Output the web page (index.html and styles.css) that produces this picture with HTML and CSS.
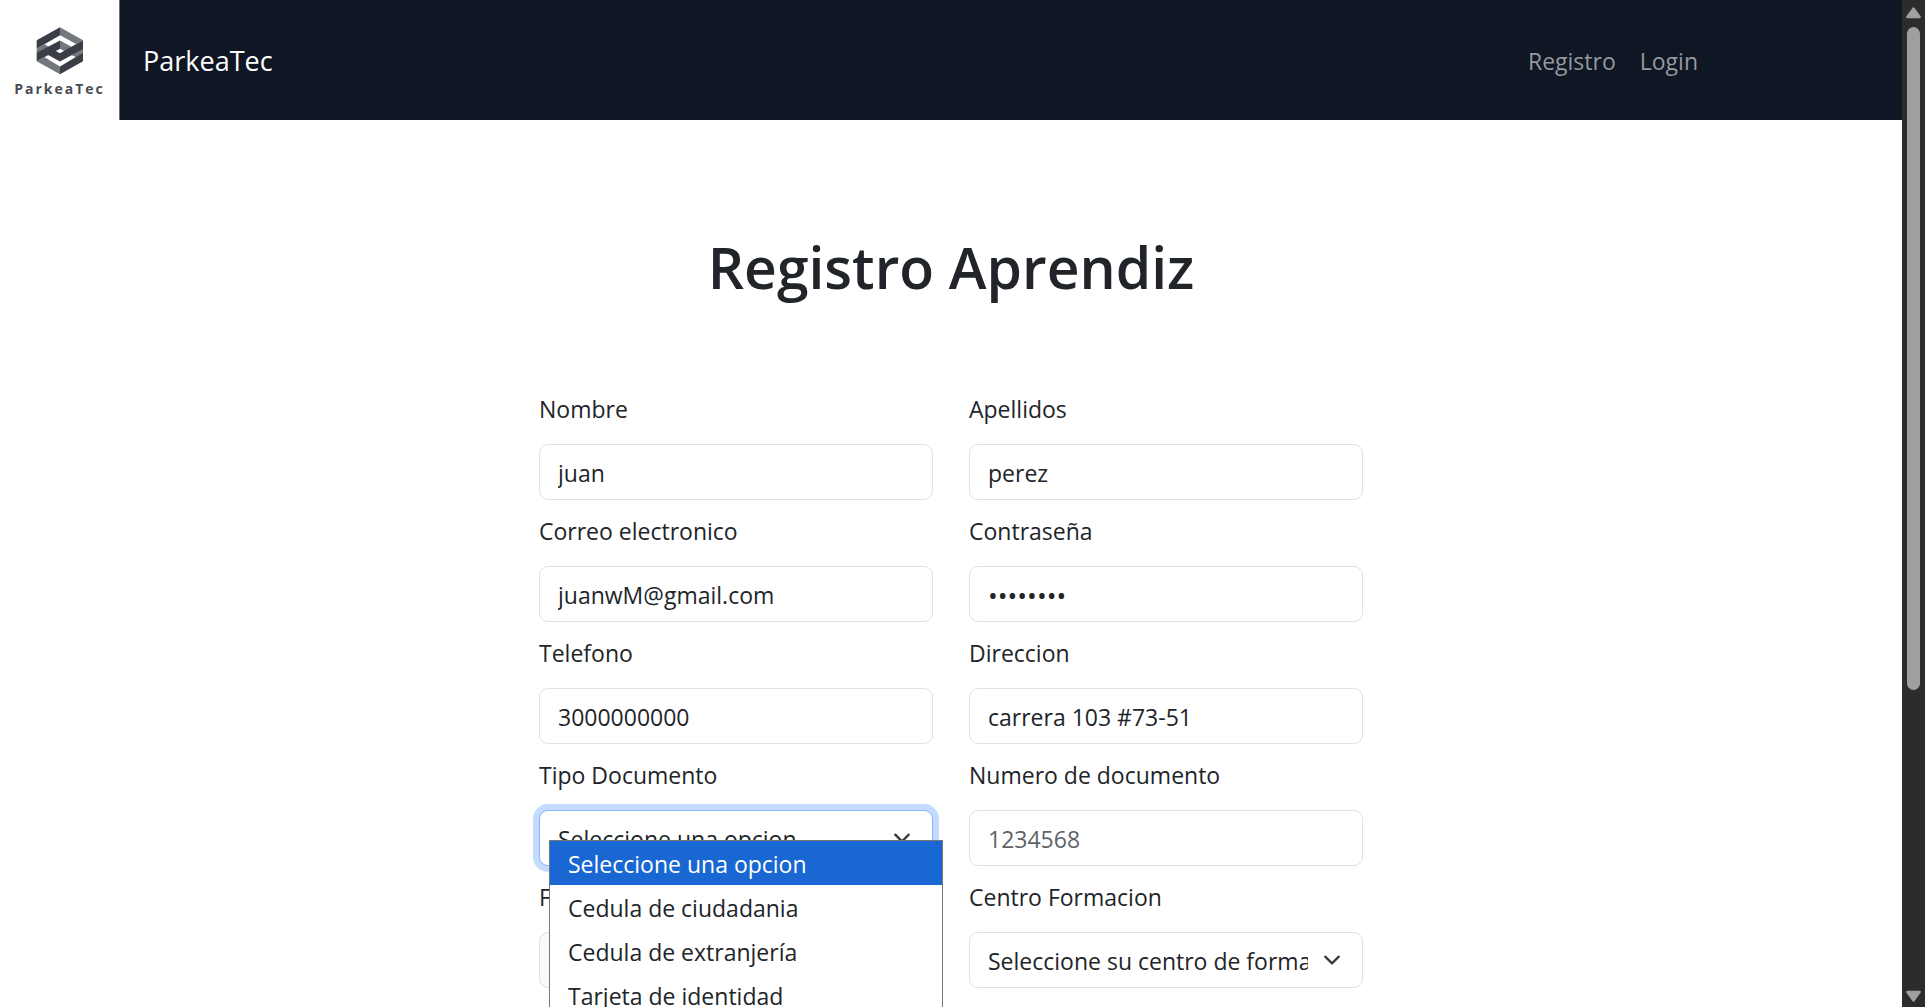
FILE: index.html
```html
<!DOCTYPE html>
<html lang="es">
<head>
  <meta charset="utf-8">
  <meta name="viewport" content="width=device-width, initial-scale=1">
  <title>ParkeaTec</title>
  <link rel="stylesheet" href="styles.css">
</head>
<body>
  <div class="page">
    <header class="navbar">
      <div class="logo">
        <svg class="logo-mark" viewBox="107 80 144 146" aria-hidden="true">
          <path fill="#74777d" d="M179 81 249 120 228 132 179 105Z"/>
          <path fill="#3b3e47" d="M179 81V105L108 146V120Z"/>
          <path fill="#74777d" d="M108 146 131 132 145 140 108 160Z"/>
          <path fill="#74777d" d="M179 121 225 146 202 158 179 146Z"/>
          <path fill="#74777d" d="M249 158V146L213 165 228 172Z"/>
          <path fill="#3b3e47" d="M249 120V147L179 185 133 160 156 148 179 160Z"/>
          <path fill="#3b3e47" d="M179 121V146L108 184V158Z"/>
          <path fill="#74777d" d="M108 184 131 171 179 200V224Z"/>
          <path fill="#3b3e47" d="M249 158V184L179 224V200Z"/>
        </svg>
        <span class="logo-name">ParkeaTec</span>
      </div>
      <a class="brand" href="#">ParkeaTec</a>
      <nav class="nav">
        <a href="#">Registro</a>
        <a href="#">Login</a>
      </nav>
    </header>
    <main class="content">
      <h1>Registro Aprendiz</h1>
      <form class="form">
        <div class="field">
          <label for="nombre">Nombre</label>
          <input class="control" id="nombre" type="text" value="juan">
        </div>
        <div class="field">
          <label for="apellidos">Apellidos</label>
          <input class="control" id="apellidos" type="text" value="perez">
        </div>
        <div class="field">
          <label for="correo">Correo electronico</label>
          <input class="control" id="correo" type="email" value="juanwM@gmail.com">
        </div>
        <div class="field">
          <label for="clave">Contraseña</label>
          <input class="control password" id="clave" type="password" value="12345678">
        </div>
        <div class="field">
          <label for="telefono">Telefono</label>
          <input class="control" id="telefono" type="tel" value="3000000000">
        </div>
        <div class="field">
          <label for="direccion">Direccion</label>
          <input class="control" id="direccion" type="text" value="carrera 103 #73-51">
        </div>
        <div class="field">
          <label for="tipo">Tipo Documento</label>
          <div class="dropdown">
            <select class="control select open" id="tipo">
              <option>Seleccione una opcion</option>
            </select>
            <ul class="menu" role="listbox" aria-label="Tipo Documento">
              <li class="active" role="option" aria-selected="true">Seleccione una opcion</li>
              <li role="option">Cedula de ciudadania</li>
              <li role="option">Cedula de extranjería</li>
              <li role="option">Tarjeta de identidad</li>
            </ul>
          </div>
        </div>
        <div class="field">
          <label for="numero">Numero de documento</label>
          <input class="control" id="numero" type="text" placeholder="1234568">
        </div>
        <div class="field">
          <label for="ficha">Ficha</label>
          <input class="control muted" id="ficha" type="text">
        </div>
        <div class="field">
          <label for="centro">Centro Formacion</label>
          <select class="control select" id="centro">
            <option>Seleccione su centro de formacion</option>
          </select>
        </div>
      </form>
    </main>
  </div>
  <div class="scrollbar" aria-hidden="true">
    <svg class="arrow" viewBox="0 0 15 11"><path d="M7.500 2 13 9.500H2Z"/></svg>
    <div class="track"><div class="thumb"></div></div>
    <svg class="arrow" viewBox="0 0 15 11"><path d="M7.500 9 13 1.500H2Z"/></svg>
  </div>
</body>
</html>
```
FILE: styles.css
```css
* {
  box-sizing: border-box;
}

body {
  display: flex;
  height: 100vh;
  margin: 0;
  overflow: hidden;
  background: #fff;
  color: #212529;
  font: 23px/36px "Open Sans", "Noto Sans", sans-serif;
}

.page {
  flex: 1;
  min-width: 0;
  overflow: hidden;
}

.navbar {
  display: flex;
  align-items: center;
  height: 120px;
  padding-right: 204px;
  background: #0f1624;
}

.logo {
  display: flex;
  flex-direction: column;
  align-items: center;
  align-self: stretch;
  width: 120px;
  padding-top: 27px;
  background: #fff;
  border-right: 1px solid #6b7280;
}

.logo-mark {
  width: 48px;
  height: 48px;
}

.logo-name {
  margin-top: 4px;
  color: #4a4d54;
  font: 700 14px/20px "Open Sans", sans-serif;
  letter-spacing: 2px;
}

.brand {
  margin-left: 23px;
  padding-top: 2px;
  color: #fff;
  font-size: 27px;
  line-height: 40px;
  text-decoration: none;
}

.nav {
  display: flex;
  gap: 24px;
  margin-left: auto;
  padding-top: 2px;
}

.nav a {
  color: #95989e;
  text-decoration: none;
}

.content {
  padding-top: 111px;
}

h1 {
  margin: 0 0 88px;
  font-size: 57px;
  line-height: 72px;
  font-weight: 600;
  text-align: center;
}

.form {
  display: grid;
  grid-template-columns: 1fr 1fr;
  gap: 13px 36px;
  max-width: 824px;
  margin: 0 auto;
}

.field {
  display: flex;
  flex-direction: column;
  gap: 17px;
  min-width: 0;
}

.control {
  width: 100%;
  height: 56px;
  padding: 2px 18px 0;
  border: 1px solid #dee2e6;
  border-radius: 9px;
  background: #fff;
  color: #212529;
  font: inherit;
}

.control::placeholder {
  color: #5f6368;
}

.password {
  font-size: 26px;
}

.muted {
  background: #f8f9fa;
}

.select {
  padding-right: 54px;
  appearance: none;
  background: #fff url("data:image/svg+xml,%3Csvg xmlns='http://www.w3.org/2000/svg' viewBox='0 0 16 16'%3E%3Cpath fill='none' stroke='%23343a40' stroke-linecap='round' stroke-linejoin='round' stroke-width='2' d='m2 5 6 6 6-6'/%3E%3C/svg%3E") no-repeat right 18px center / 24px 18px;
}

.open {
  border-color: #86b7fe;
  box-shadow: 0 0 0 6px #c2dbfe;
}

.dropdown {
  position: relative;
}

.menu {
  position: absolute;
  top: 30px;
  left: 10px;
  z-index: 1;
  width: 100%;
  margin: 0;
  padding: 0;
  border: 1px solid #767676;
  background: #fff;
  line-height: 42px;
  list-style: none;
}

.menu li {
  padding: 2px 18px 0;
}

.menu .active {
  background: #1967d2;
  color: #fff;
}

.scrollbar {
  display: flex;
  flex-direction: column;
  align-items: center;
  width: 23px;
  padding: 6px 0 4px;
  background: #2c2c2c;
}

.arrow {
  width: 17px;
  height: 13px;
  fill: #9f9f9f;
  stroke: #9f9f9f;
  stroke-width: 2;
  stroke-linejoin: round;
}

.track {
  flex: 1;
  padding: 8px 0;
}

.thumb {
  width: 13px;
  height: calc(70% - 6px);
  border-radius: 7px;
  background: #9f9f9f;
}
```
